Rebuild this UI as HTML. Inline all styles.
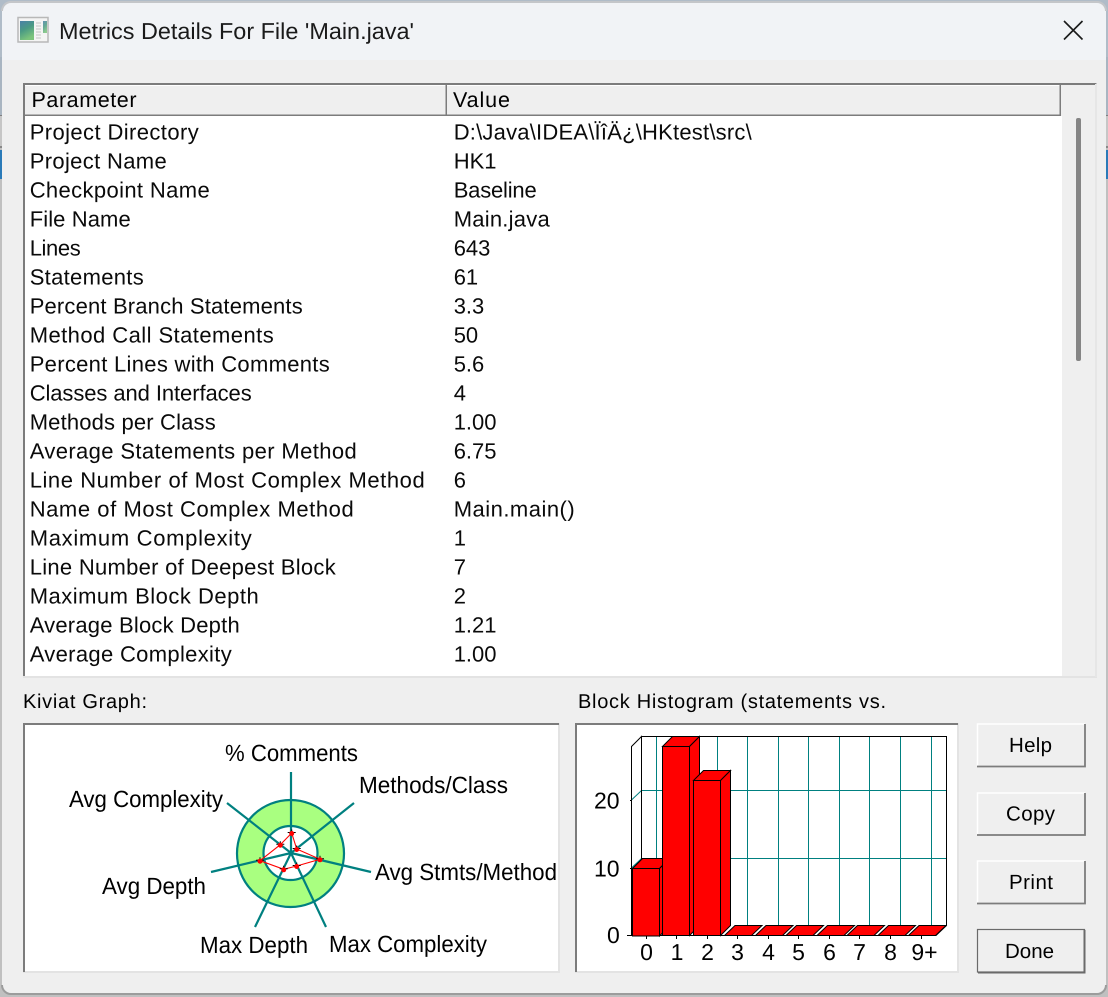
<!DOCTYPE html>
<html><head><meta charset="utf-8"><title>Metrics Details</title>
<style>
html,body{margin:0;padding:0;background:#c0c0c0;width:1108px;height:997px;overflow:hidden}
svg{display:block}
text{font-family:"Liberation Sans",sans-serif;fill:#000;text-rendering:geometricPrecision}
.r{font-size:22px;fill:#0a0a0a}
.k{font-size:23.500px}
.h{font-size:23px}
.b{font-size:20.500px}
.l{font-size:20px}
</style></head><body>
<svg width="1108" height="997" viewBox="0 0 1108 997" xmlns="http://www.w3.org/2000/svg">
<!-- desktop behind -->
<rect width="1108" height="997" fill="#c0c0c0"/>
<rect x="0" y="0" width="1108" height="57" fill="#b0bcc8"/>
<rect x="0" y="57" width="1108" height="58" fill="#a9b5c1"/>
<rect x="0" y="115" width="1108" height="1" fill="#808080"/>
<rect x="0" y="116" width="1108" height="30" fill="#c6c6c6"/>
<rect x="0" y="146" width="1108" height="2" fill="#888"/>
<rect x="0" y="150" width="1108" height="29" fill="#2a7ab8"/>
<!-- window -->
<rect x="2" y="2" width="1104" height="992" rx="9" fill="#efefef"/>
<path d="M2 60V11a9 9 0 0 1 9-9H1097a9 9 0 0 1 9 9V60Z" fill="#f1f3f6"/>
<path d="M2 11a9 9 0 0 1 9-9H1097a9 9 0 0 1 9 9" fill="none" stroke="#c4c6c9" stroke-width="2"/>
<path d="M2 985a9 9 0 0 0 9 9H1097a9 9 0 0 0 9-9" fill="none" stroke="#9c9c9c" stroke-width="2"/>
<!-- title icon -->
<rect x="18" y="17.500" width="30" height="24.500" fill="#f4f4f4" stroke="#b8b8b8" stroke-width="1.500"/>
<defs><linearGradient id="g" x1="0" y1="0" x2="0.4" y2="1"><stop offset="0" stop-color="#4a80a8"/><stop offset="0.5" stop-color="#4a9a84"/><stop offset="1" stop-color="#7cc47c"/></linearGradient></defs>
<rect x="20" y="21" width="14" height="19" fill="url(#g)"/>
<rect x="43" y="21" width="4" height="12" fill="url(#g)" opacity="0.85"/>
<path d="M36 23h5M36 26h5M36 29h5M36 32h5M36 35h5M36 38h5" stroke="#c4c4c4" stroke-width="1"/>
<text x="59" y="39" font-size="23" textLength="355" lengthAdjust="spacingAndGlyphs" style="fill:#1a1a1a">Metrics Details For File 'Main.java'</text>
<path d="M1064 21L1082.500 39.500M1082.500 21L1064 39.500" stroke="#1a1a1a" stroke-width="1.600" fill="none"/>

<!-- list frame -->
<rect x="23" y="83" width="1074" height="595" fill="#fbfbfb"/>
<rect x="23.500" y="83" width="1073" height="2" fill="#7c7c7c"/>
<rect x="23" y="83" width="2" height="594" fill="#7c7c7c"/>
<rect x="25" y="85" width="1071" height="591" fill="#efefef"/>
<rect x="25" y="116" width="1037" height="560" fill="#fff"/>
<rect x="23" y="676" width="1074" height="2" fill="#e3e3e3"/>
<rect x="1095" y="84" width="2" height="593" fill="#e6e6e6"/>
<!-- header -->
<rect x="25" y="85" width="1036" height="30" fill="#efefef"/>
<rect x="25" y="85" width="1036" height="1" fill="#fff"/>
<rect x="25" y="114.500" width="1036" height="1.500" fill="#7c7c7c"/>
<rect x="445.500" y="85" width="1.500" height="31" fill="#7c7c7c"/>
<rect x="1059.500" y="85" width="1.500" height="31" fill="#7c7c7c"/>
<text x="31.500" y="107" style="font-size:21.500px" textLength="105">Parameter</text>
<text x="453" y="107" style="font-size:21.500px" textLength="57">Value</text>
<!-- scrollbar thumb -->
<rect x="1076" y="118" width="5" height="243" rx="2" fill="#858585"/>

<!-- rows -->
<g transform="translate(-0.300,-0.700)">
<text class="r" x="30" y="140" textLength="169">Project Directory</text>
<text class="r" x="30" y="169" textLength="137">Project Name</text>
<text class="r" x="30" y="198" textLength="180">Checkpoint Name</text>
<text class="r" x="30" y="227" textLength="101">File Name</text>
<text class="r" x="30" y="256" textLength="51">Lines</text>
<text class="r" x="30" y="285" textLength="114">Statements</text>
<text class="r" x="30" y="314" textLength="273">Percent Branch Statements</text>
<text class="r" x="30" y="343" textLength="244">Method Call Statements</text>
<text class="r" x="30" y="372" textLength="300">Percent Lines with Comments</text>
<text class="r" x="30" y="401" textLength="222">Classes and Interfaces</text>
<text class="r" x="30" y="430" textLength="186">Methods per Class</text>
<text class="r" x="30" y="459" textLength="327">Average Statements per Method</text>
<text class="r" x="30" y="488" textLength="395">Line Number of Most Complex Method</text>
<text class="r" x="30" y="517" textLength="324">Name of Most Complex Method</text>
<text class="r" x="30" y="546" textLength="222">Maximum Complexity</text>
<text class="r" x="30" y="575" textLength="306">Line Number of Deepest Block</text>
<text class="r" x="30" y="604" textLength="229">Maximum Block Depth</text>
<text class="r" x="30" y="633" textLength="210">Average Block Depth</text>
<text class="r" x="30" y="662" textLength="202">Average Complexity</text>

<text class="r" x="454" y="140" textLength="298">D:\Java\IDEA\ÏîÄ¿\HKtest\src\</text>
<text class="r" x="454" y="169">HK1</text>
<text class="r" x="454" y="198" textLength="83">Baseline</text>
<text class="r" x="454" y="227" textLength="96">Main.java</text>
<text class="r" x="454" y="256">643</text>
<text class="r" x="454" y="285">61</text>
<text class="r" x="454" y="314">3.3</text>
<text class="r" x="454" y="343">50</text>
<text class="r" x="454" y="372">5.6</text>
<text class="r" x="454" y="401">4</text>
<text class="r" x="454" y="430">1.00</text>
<text class="r" x="454" y="459">6.75</text>
<text class="r" x="454" y="488">6</text>
<text class="r" x="454" y="517" textLength="121">Main.main()</text>
<text class="r" x="454" y="546">1</text>
<text class="r" x="454" y="575">7</text>
<text class="r" x="454" y="604">2</text>
<text class="r" x="454" y="633">1.21</text>
<text class="r" x="454" y="662">1.00</text>
</g>

<!-- section labels -->
<text class="l" x="23" y="708" textLength="124">Kiviat Graph:</text>
<text class="l" x="578" y="708" textLength="308">Block Histogram (statements vs.</text>

<!-- kiviat frame -->
<rect x="23" y="723" width="537" height="250" fill="#e3e3e3"/>
<rect x="23" y="723" width="536" height="2" fill="#7c7c7c"/>
<rect x="23" y="723" width="2" height="249" fill="#7c7c7c"/>
<rect x="25" y="725" width="533" height="246" fill="#fff"/>

<!-- kiviat -->
<circle cx="290.500" cy="853.500" r="53.500" fill="#a9ff80" stroke="#008080" stroke-width="2.200"/>
<circle cx="290.500" cy="853" r="27" fill="#fff" stroke="#008080" stroke-width="2.200"/>
<g stroke="#008080" stroke-width="2.200" fill="none">
<path d="M291 853V772M291 853L227 803M291 853L211 872M291 853L255 927M291 853L326 927M291 853L371 872M291 853L354 803"/>
</g>
<polygon points="291.700,833 296.700,849 320,859.300 296.700,866 283.700,869.300 260,860.700 280.300,844.700" fill="none" stroke="#ff0000" stroke-width="1.100"/>
<g stroke="#000" stroke-width="1" fill="none">
<path d="M287.700 832.500h8M291.700 829.500v3M292.700 848.500h8M296.700 845.500v3M316 858.800h8M320 855.800v3M292.700 865.500h8M296.700 862.500v3M279.700 868.800h8M283.700 865.800v3M256 860.200h8M260 857.200v3M276.300 844.200h8M280.300 841.200v3"/>
</g>
<g fill="#ff0000">
<circle cx="291.700" cy="833.500" r="2.500"/><circle cx="296.700" cy="849.500" r="2.500"/><circle cx="320" cy="859.800" r="2.500"/><circle cx="296.700" cy="866.500" r="2.500"/><circle cx="283.700" cy="869.800" r="2.500"/><circle cx="260" cy="861.200" r="2.500"/><circle cx="280.300" cy="845.200" r="2.500"/>
</g>
<text class="k" x="225" y="761" textLength="133" lengthAdjust="spacingAndGlyphs">% Comments</text>
<text class="k" x="69" y="807" textLength="154" lengthAdjust="spacingAndGlyphs">Avg Complexity</text>
<text class="k" x="359" y="793" textLength="149" lengthAdjust="spacingAndGlyphs">Methods/Class</text>
<text class="k" x="375" y="880" textLength="182" lengthAdjust="spacingAndGlyphs">Avg Stmts/Method</text>
<text class="k" x="102" y="894" textLength="104" lengthAdjust="spacingAndGlyphs">Avg Depth</text>
<text class="k" x="200" y="953" textLength="108" lengthAdjust="spacingAndGlyphs">Max Depth</text>
<text class="k" x="329" y="952" textLength="158" lengthAdjust="spacingAndGlyphs">Max Complexity</text>

<!-- histogram frame -->
<rect x="575" y="723" width="384" height="250" fill="#e3e3e3"/>
<rect x="575" y="723" width="383" height="2" fill="#7c7c7c"/>
<rect x="575" y="723" width="2" height="249" fill="#7c7c7c"/>
<rect x="577" y="725" width="380" height="246" fill="#fff"/>

<!-- grid -->
<g stroke="#008080" stroke-width="1" fill="none" shape-rendering="crispEdges">
<path d="M656.500 736V925M687.500 736V925M717.500 736V925M747.500 736V925M778.500 736V925M808.500 736V925M839.500 736V925M869.500 736V925M900.500 736V925M931.500 736V925"/>
<path d="M641 790.500H946M641 858.500H946"/>
</g>
<path d="M631.500 800L641.500 790.500M631.500 868L641.500 858.500" stroke="#008080" stroke-width="1" fill="none"/>
<g stroke="#000" stroke-width="1" fill="none">
<path d="M641.500 736.500H946.500V925.500L936 935.500H631.500V746.500L641.500 736.500V925"/>
<path d="M631.500 746.500V935.500" />
<path d="M627 935.500H632M630 868.500H632M630 800.500H632"/>
<path d="M646.500 936V939M676.500 936V939M707.500 936V939M737.500 936V939M768.500 936V939M798.500 936V939M829.500 936V939M859.500 936V939M890.500 936V939M921.500 936V939"/>
</g>

<!-- small bars -->
<g fill="#ff0000" stroke="#000" stroke-width="1">
<path d="M724.500 935.500L735 925.500H762L751.500 935.500Z"/>
<path d="M755.500 935.500L766 925.500H793L782.500 935.500Z"/>
<path d="M786 935.500L796.500 925.500H823.500L813 935.500Z"/>
<path d="M817 935.500L827.500 925.500H854.500L844 935.500Z"/>
<path d="M847 935.500L857.500 925.500H884.500L874 935.500Z"/>
<path d="M878 935.500L888.500 925.500H915.500L905 935.500Z"/>
<path d="M908.500 935.500L919 925.500H946L935.500 935.500Z"/>
</g>
<!-- bars -->
<g fill="#ff0000" stroke="#000" stroke-width="1">
<path d="M632.500 868.500L642.500 858.500H669.500L659.500 868.500Z"/>
<path d="M659.500 868.500L669.500 858.500V926L659.500 936Z"/>
<rect x="632.500" y="868.500" width="27" height="67.500"/>
<path d="M662.500 746.500L672.500 736.500H699.500L689.500 746.500Z"/>
<path d="M689.500 746.500L699.500 736.500V925.500L689.500 935.500Z"/>
<rect x="662.500" y="746.500" width="27" height="189"/>
<path d="M693.500 780.500L703.500 770.500H730.500L720.500 780.500Z"/>
<path d="M720.500 780.500L730.500 770.500V925.500L720.500 935.500Z"/>
<rect x="693.500" y="780.500" width="27" height="155"/>
</g>

<!-- axis labels -->
<text class="h" x="594" y="808.500">20</text>
<text class="h" x="594" y="876.500">10</text>
<text class="h" x="607" y="943">0</text>
<g text-anchor="middle">
<text class="h" x="646.500" y="960">0</text>
<text class="h" x="677" y="960">1</text>
<text class="h" x="707.500" y="960">2</text>
<text class="h" x="737.500" y="960">3</text>
<text class="h" x="768.500" y="960">4</text>
<text class="h" x="798.500" y="960">5</text>
<text class="h" x="829.500" y="960">6</text>
<text class="h" x="859.500" y="960">7</text>
<text class="h" x="890.500" y="960">8</text>
<text class="h" x="924.500" y="960">9+</text>
</g>

<!-- buttons -->
<g>
<path d="M977.500 766V724H1085" fill="none" stroke="#fff" stroke-width="1.500"/>
<path d="M977 766.500H1085V724" fill="none" stroke="#7c7c7c" stroke-width="1.800"/>
<path d="M977.500 835V793H1085" fill="none" stroke="#fff" stroke-width="1.500"/>
<path d="M977 835H1085V793" fill="none" stroke="#7c7c7c" stroke-width="1.800"/>
<path d="M977.500 903V861H1085" fill="none" stroke="#fff" stroke-width="1.500"/>
<path d="M977 903.500H1085V861" fill="none" stroke="#7c7c7c" stroke-width="1.800"/>
<rect x="977.500" y="929.500" width="107" height="42.500" fill="none" stroke="#6a6a6a" stroke-width="1.200"/>
<path d="M978 972.500H1084.500V930" fill="none" stroke="#6a6a6a" stroke-width="2"/>
</g>
<text class="b" x="1009" y="752" textLength="43">Help</text>
<text class="b" x="1006" y="820.500" textLength="49">Copy</text>
<text class="b" x="1009" y="889" textLength="44">Print</text>
<text class="b" x="1005" y="958" textLength="49">Done</text>
</svg>
</body></html>
